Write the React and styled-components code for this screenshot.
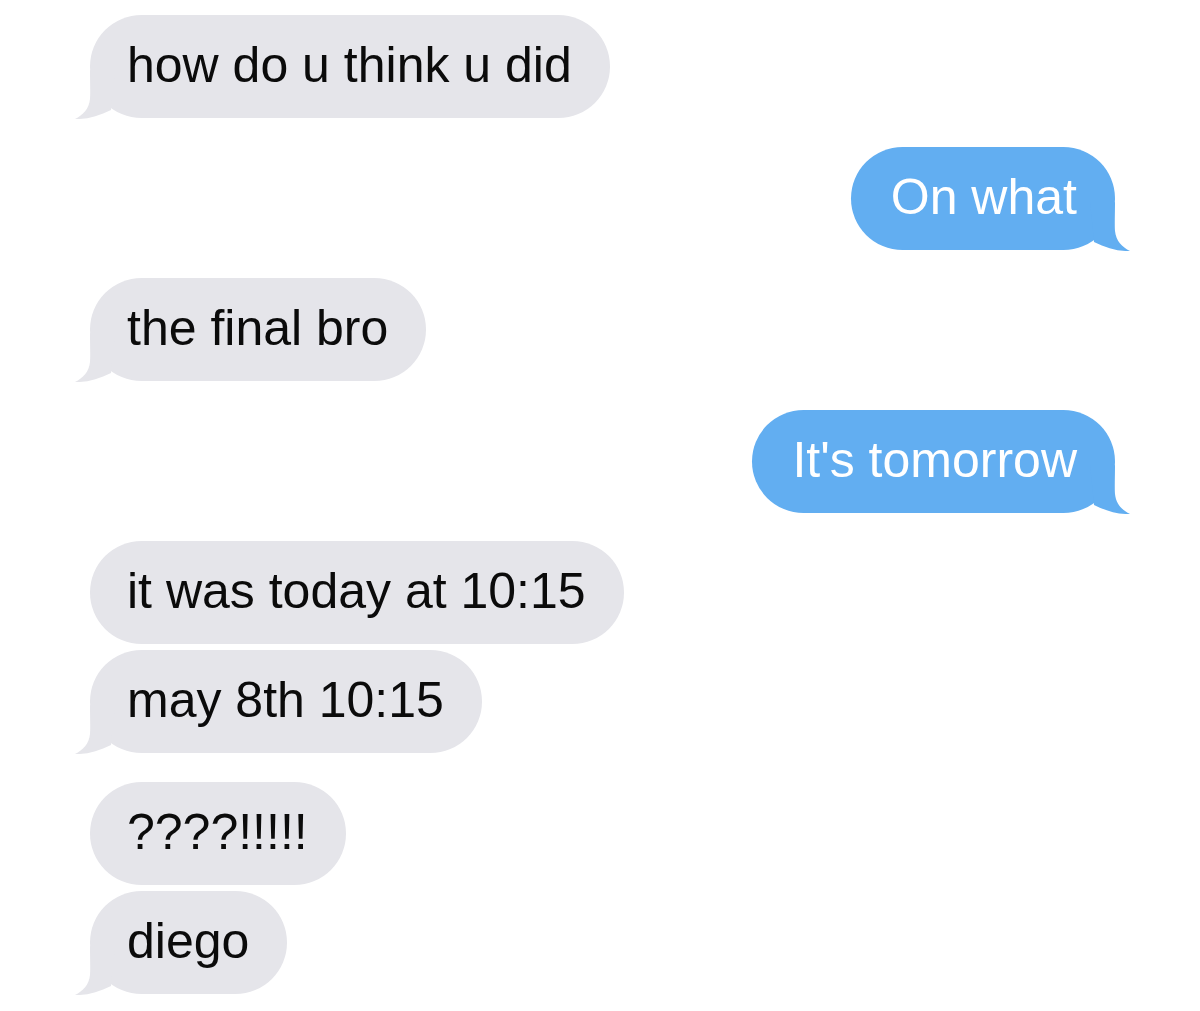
import React from 'react'
import styled, { createGlobalStyle } from 'styled-components'

const GlobalStyle = createGlobalStyle`
  html, body {
    margin: 0;
    padding: 0;
    background: #ffffff;
  }
  body {
    font-family: "Liberation Sans", Arial, sans-serif;
  }
`

const GREY = '#e5e5ea'
const BLUE = '#62aef1'

const StyleThreadDiv = styled.div`
  width: 1200px;
  min-height: 1011px;
  box-sizing: border-box;
  padding: 15px 85px 0 90px;
  display: flex;
  flex-direction: column;
`

const StyleRowDiv = styled.div`
  display: flex;
  justify-content: ${({ $mine }) => ($mine ? 'flex-end' : 'flex-start')};
  margin-top: ${({ $gap }) => $gap}px;
`

const StyleBubbleDiv = styled.div`
  position: relative;
  height: 103px;
  box-sizing: border-box;
  padding: ${({ $mine }) => ($mine ? '0 38px 3px 40px' : '0 38px 3px 37px')};
  border-radius: 52px;
  display: flex;
  align-items: center;
  background: ${({ $mine }) => ($mine ? BLUE : GREY)};
  color: ${({ $mine }) => ($mine ? '#ffffff' : '#0b0b0b')};
  font-size: 50px;
  line-height: 1;
  white-space: nowrap;
`

const StyleTextSpan = styled.span`
  position: relative;
`

const StyleTailSvg = styled.svg`
  position: absolute;
  bottom: -1px;
  width: 50px;
  height: 50px;
  ${({ $mine }) => ($mine ? 'right: -15px; transform: scaleX(-1);' : 'left: -15px;')}
`

const Tail = ({ mine }) => (
  <StyleTailSvg $mine={mine} viewBox="0 0 50 50">
    <path
      d="M15 2 C15 12 15.5 24 15 30 C14 40 8 46 0 50 C12 50.5 24 47 36 41 L40 0 L26 0 C20 0 15 0 15 2 Z"
      fill={mine ? BLUE : GREY}
    />
  </StyleTailSvg>
)

const messages = [
  { text: 'how do u think u did', mine: false, tail: true, gap: 0 },
  { text: 'On what', mine: true, tail: true, gap: 28.5 },
  { text: 'the final bro', mine: false, tail: true, gap: 28.5 },
  { text: "It's tomorrow", mine: true, tail: true, gap: 28.5 },
  { text: 'it was today at 10:15', mine: false, tail: false, gap: 28.5 },
  { text: 'may 8th 10:15', mine: false, tail: true, gap: 6 },
  { text: '????!!!!!', mine: false, tail: false, gap: 28.5 },
  { text: 'diego', mine: false, tail: true, gap: 6 },
]

const App = () => {
  return (
    <>
      <GlobalStyle />
      <StyleThreadDiv>
        {messages.map((m, i) => (
          <StyleRowDiv key={i} $mine={m.mine} $gap={m.gap}>
            <StyleBubbleDiv $mine={m.mine}>
              {m.tail && <Tail mine={m.mine} />}
              <StyleTextSpan>{m.text}</StyleTextSpan>
            </StyleBubbleDiv>
          </StyleRowDiv>
        ))}
      </StyleThreadDiv>
    </>
  )
}

export default App
